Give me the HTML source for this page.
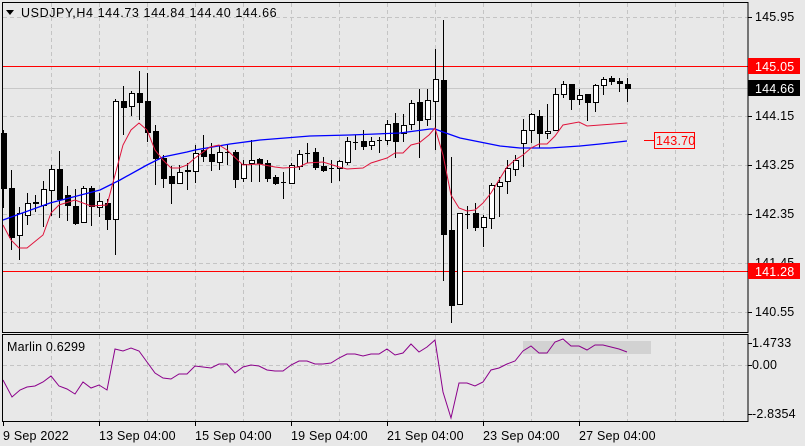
<!DOCTYPE html>
<html><head><meta charset="utf-8"><style>
html,body{margin:0;padding:0;background:#e8e8e8;}
svg{display:block;font-family:"Liberation Sans",sans-serif;font-size:12.5px;letter-spacing:0.2px;}
</style></head><body>
<svg id="c" width="805" height="446" xmlns="http://www.w3.org/2000/svg"></svg>
<script>
var s=[];
s.push('<rect x="0" y="0" width="805" height="446" fill="#e8e8e8"/>');
for(var x=51;x<748;x+=48){s.push('<line x1="'+(x+.5)+'" y1="3" x2="'+(x+.5)+'" y2="332" stroke="#c4c4c4" stroke-dasharray="4,3"/>');
s.push('<line x1="'+(x+.5)+'" y1="335" x2="'+(x+.5)+'" y2="421" stroke="#c4c4c4" stroke-dasharray="4,3"/>');}
[17,116,165,214,263,312].forEach(function(y){s.push('<line x1="3" y1="'+(y+.5)+'" x2="748" y2="'+(y+.5)+'" stroke="#c4c4c4" stroke-dasharray="4,3"/>');});
s.push('<line x1="3" y1="365.5" x2="748" y2="365.5" stroke="#c4c4c4" stroke-dasharray="4,3"/>');
s.push('<line x1="3" y1="88.5" x2="748" y2="88.5" stroke="#c8c8c8"/>');
var C=[[3,133,188,130,208],[11,188,237,170,250],[19,235,213,207,260],[27,215,203,193,225],[35,202,203,195,212],[43,205,189,181,227],[51,190,169,165,216],[59,169,199,151,218],[67,195,205,186,221],[75,206,223,189,225],[83,222,188,186,223],[91,188,206,186,226],[99,207,201,193,217],[107,203,219,199,230],[115,219,101,99,255],[123,101,107,86,135],[131,106,93,91,116],[139,93,102,71,120],[147,101,132,73,142],[155,131,158,125,185],[163,158,178,155,188],[171,176,183,166,204],[179,183,172,165,182],[187,170,171,163,190],[195,171,153,145,183],[203,150,156,135,162],[211,154,161,143,171],[219,162,152,145,170],[227,152,152,145,165],[235,152,179,150,188],[243,178,164,160,182],[251,163,160,140,182],[259,159,163,158,182],[267,163,178,160,182],[275,177,183,175,185],[283,182,182,172,199],[291,183,165,163,184],[299,166,154,150,170],[307,153,153,143,163],[315,152,167,148,170],[323,166,170,157,172],[331,168,168,160,183],[339,168,161,160,181],[347,162,141,137,165],[355,142,142,135,150],[363,141,146,130,150],[371,145,141,137,150],[379,140,140,137,153],[387,140,124,120,145],[395,123,141,113,158],[403,133,125,114,142],[411,124,103,100,130],[419,102,120,89,158],[427,119,100,89,126],[435,101,79,49,150],[443,80,234,20,281],[451,230,305,157,323],[459,304,213,213,304],[467,214,214,206,229],[475,213,227,203,231],[483,227,217,215,247],[491,218,185,183,229],[499,186,182,177,217],[507,181,168,160,194],[515,169,160,155,176],[523,143,130,119,167],[531,130,114,113,143],[539,116,133,110,148],[547,133,131,104,139],[555,130,94,88,130],[563,94,84,81,98],[571,84,99,84,110],[579,99,95,89,105],[587,94,102,94,121],[595,102,85,84,112],[603,85,79,77,95],[611,78,81,76,85],[619,81,83,78,92],[627,84,88,78,102]];
s.push('<line x1="3" y1="66.5" x2="748" y2="66.5" stroke="#ff0000"/>');
s.push('<line x1="3" y1="271.5" x2="748" y2="271.5" stroke="#ff0000"/>');
C.forEach(function(c){var x=c[0],o=c[1],cl=c[2],h=c[3],l=c[4];
s.push('<line x1="'+(x+.5)+'" y1="'+h+'" x2="'+(x+.5)+'" y2="'+l+'" stroke="#000"/>');
var t=Math.min(o,cl),b=Math.max(o,cl);
if(b-t<1){s.push('<line x1="'+(x-2)+'" y1="'+(t+.5)+'" x2="'+(x+3)+'" y2="'+(t+.5)+'" stroke="#000"/>');}
else if(cl<o){s.push('<rect x="'+(x-2+.5)+'" y="'+(t+.5)+'" width="5" height="'+(b-t)+'" fill="#fff" stroke="#000"/>');}
else{s.push('<rect x="'+(x-2)+'" y="'+t+'" width="6" height="'+(b-t+1)+'" fill="#000"/>');}
});
function pl(p,col,w){s.push('<polyline fill="none" stroke="'+col+'" stroke-width="'+(w||1)+'" points="'+p+'"/>');}
pl('3,220 50,203 100,190 120,180 147,165 163,157 187,152 195,150 230,144 260,140 310,136 350,135 400,133 430,129 435,129 443,132 460,138 480,142 500,146 520,148 550,148 580,146 600,144 627,141','#0000ff',1.3);
pl('3,225 11,240 19,248 27,248 43,235 51,213 59,205 75,200 91,206 107,205 115,175 123,145 131,130 139,123 147,130 155,150 163,160 171,168 179,168 187,165 195,158 210,147 219,145 227,150 243,165 259,164 275,167 283,168 299,167 307,163 323,162 339,167 347,169 363,168 371,163 387,158 395,153 403,153 411,145 419,143 429,135 435,128 443,155 447,175 451,195 459,208 467,211 475,210 483,203 491,193 499,180 507,167 515,160 523,155 531,148 539,144 547,144 555,136 563,125 579,122 587,126 627,123','#e0143c');
s.push('<rect x="2.5" y="2.5" width="745.5" height="330" fill="none" stroke="#000"/>');
s.push('<path d="M6 10 L14 10 L10 15 Z" fill="#000"/>');
s.push('<text x="21" y="17" fill="#000" style="letter-spacing:0.6px">USDJPY,H4  144.73 144.84 144.40 144.66</text>');
s.push('<line x1="644" y1="140.5" x2="654" y2="140.5" stroke="#ff0000"/>');
s.push('<rect x="654.5" y="132.5" width="40" height="16" fill="#e8e8e8" stroke="#ff0000"/>');
s.push('<text x="656" y="145" fill="#ff0000">143.70</text>');
[[17,'145.95'],[116,'144.15'],[165,'143.25'],[214,'142.35'],[263,'141.45'],[312,'140.55']].forEach(function(a){
s.push('<line x1="748" y1="'+(a[0]+.5)+'" x2="752" y2="'+(a[0]+.5)+'" stroke="#000"/>');
s.push('<text x="755" y="'+(a[0]+4)+'" fill="#000">'+a[1]+'</text>');});
s.push('<rect x="748" y="58" width="52" height="16" fill="#ff0000"/><text x="755" y="71" fill="#fff">145.05</text>');
s.push('<rect x="748" y="80" width="52" height="16" fill="#000"/><text x="755" y="93" fill="#fff">144.66</text>');
s.push('<rect x="748" y="263" width="52" height="16" fill="#ff0000"/><text x="755" y="276" fill="#fff">141.28</text>');
s.push('<rect x="523" y="341" width="128" height="13" fill="#d2d2d2"/>');
pl('3,380 12,397 20,390 27,387 35,386 43,382 51,376 59,386 67,389 75,394 83,382 91,388 99,385 107,390 115,349 123,351 131,348 139,351 147,362 155,373 163,378 171,379 179,374 187,374 195,366 203,367 211,368 219,364 227,364 235,373 243,367 251,365 259,366 267,370 275,371 283,371 291,365 299,361 307,361 315,364 323,364 331,363 339,358 347,354 355,354 363,356 371,354 379,354 387,349 395,355 403,353 411,344 419,352 427,347 435,340 443,392 451,418 459,383 467,383 475,386 483,382 491,370 499,368 507,364 515,361 523,351 531,346 539,353 547,353 555,342 563,339 571,346 579,346 587,350 595,345 603,345 611,347 619,349 627,352','#8b008b');
s.push('<rect x="2.5" y="334.5" width="745.5" height="87" fill="none" stroke="#000"/>');
s.push('<text x="7" y="351" fill="#000">Marlin 0.6299</text>');
[[343,'1.4733'],[365,'0.00'],[414,'-2.8354']].forEach(function(a){
s.push('<line x1="748" y1="'+(a[0]+.5)+'" x2="752" y2="'+(a[0]+.5)+'" stroke="#000"/>');
s.push('<text x="752" y="'+(a[0]+4)+'" fill="#000">'+a[1]+'</text>');});
[[3,'9 Sep 2022'],[99,'13 Sep 04:00'],[195,'15 Sep 04:00'],[291,'19 Sep 04:00'],[387,'21 Sep 04:00'],[483,'23 Sep 04:00'],[579,'27 Sep 04:00']].forEach(function(a){
s.push('<line x1="'+(a[0]+.5)+'" y1="422" x2="'+(a[0]+.5)+'" y2="426" stroke="#000"/>');
s.push('<text x="'+a[0]+'" y="440" fill="#000">'+a[1]+'</text>');});
document.getElementById('c').innerHTML=s.join('');
</script>
</body></html>
